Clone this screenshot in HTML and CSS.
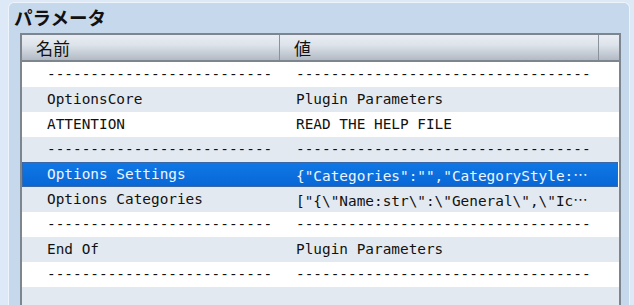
FILE: index.html
```html
<!DOCTYPE html>
<html lang="ja">
<head>
<meta charset="utf-8">
<link rel="stylesheet" href="styles.css">
</head>
<body>
<div class="panel">
  <div class="title">パラメータ</div>
  <div class="table">
    <div class="head">
      <div class="hcell c1">名前</div>
      <div class="hcell c2">値</div>
      <div class="hcell c3"></div>
    </div>
    <div class="body">
      <div class="row"><div class="cell n">--------------------------</div><div class="cell v">----------------------------------</div></div>
      <div class="row alt"><div class="cell n">OptionsCore</div><div class="cell v">Plugin Parameters</div></div>
      <div class="row"><div class="cell n">ATTENTION</div><div class="cell v">READ THE HELP FILE</div></div>
      <div class="row alt"><div class="cell n">--------------------------</div><div class="cell v">----------------------------------</div></div>
      <div class="row sel"><div class="cell n">Options Settings</div><div class="cell v">{"Categories":"","CategoryStyle:<span class="ell">⋯</span></div></div>
      <div class="row alt"><div class="cell n">Options Categories</div><div class="cell v">["{\"Name:str\":\"General\",\"Ic<span class="ell">⋯</span></div></div>
      <div class="row"><div class="cell n">--------------------------</div><div class="cell v">----------------------------------</div></div>
      <div class="row alt"><div class="cell n">End Of</div><div class="cell v">Plugin Parameters</div></div>
      <div class="row"><div class="cell n">--------------------------</div><div class="cell v">----------------------------------</div></div>
      <div class="row alt last"><div class="cell n"></div><div class="cell v"></div></div>
    </div>
  </div>
</div>
</body>
</html>
```
FILE: styles.css
```css
html, body {
  margin: 0;
  padding: 0;
  height: 305px;
  overflow: hidden;
}
body {
  background: #dde9f6;
  font-family: "Noto Sans CJK JP", "DejaVu Sans", sans-serif;
}
.panel {
  margin: 2px 4px 0 8px;
  height: 303px;
  background: #c5d8ec;
  border: 1px solid #eef4fb;
  border-bottom: none;
  border-radius: 6px 6px 0 0;
  box-sizing: border-box;
  display: flex;
  flex-direction: column;
  overflow: hidden;
}
.title {
  height: 30px;
  flex: none;
  box-sizing: border-box;
  padding: 3px 0 0 5px;
  font-size: 18.5px;
  font-weight: bold;
  line-height: 22px;
  color: #111;
}
.table {
  flex: 1;
  min-height: 0;
  margin: 0 8px 0 11px;
  border: 2px solid #7d858e;
  border-bottom: none;
  background: #fff;
  overflow: hidden;
}
.head {
  display: flex;
  height: 25px;
  border-bottom: 2px solid #7d858e;
  background: linear-gradient(#eaeef4, #dde3ea 40%, #b2bac4);
}
.hcell {
  box-sizing: border-box;
  border-right: 1px solid #8a929b;
  font-size: 17px;
  line-height: 25px;
  color: #111;
}
.c1 { width: 258px; padding-left: 14px; }
.c2 { width: 319px; padding-left: 14px; }
.c3 { flex: 1; border-right: none; }
.row {
  display: flex;
  height: 25px;
  box-sizing: border-box;
  background: #fff;
  font-family: "DejaVu Sans Mono", monospace;
  font-size: 14.4px;
  line-height: 25px;
  color: #111;
}
.row.alt { background: #e3e9f0; }
.row.last { height: 20px; }
.row.sel {
  background: linear-gradient(#0f78e6, #0867d6);
  border: 1px solid #3a67a6;
  margin: 0 1px 0 0;
  line-height: 23px;
  color: #eef5ff;
}
.cell {
  box-sizing: border-box;
  white-space: nowrap;
  overflow: hidden;
}
.n { width: 258px; padding-left: 25px; }
.v { width: 319px; padding-left: 16px; }
.row.sel .n { padding-left: 24px; width: 257px; }
.ell {
  font-family: "Noto Sans CJK JP", sans-serif;
  letter-spacing: 1px;
}
```
